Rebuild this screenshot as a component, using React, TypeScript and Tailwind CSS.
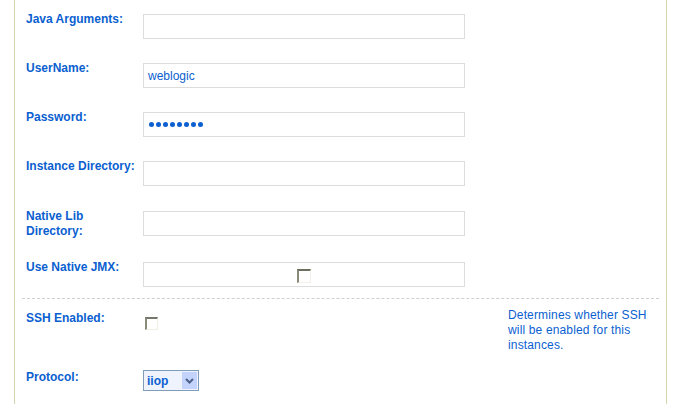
import React from 'react';

const labelCls = 'w-[117px] shrink-0 text-[12px] font-bold leading-[15px] text-[#0b5fd0] -mt-[2px]';
const boxCls = 'w-[322px] h-[25px] border border-[#dcdcdc] bg-white flex items-center';

function Checkbox() {
  return (
    <span className="block w-[13px] h-[13px] border-t-2 border-l-2 border-t-[#76766a] border-l-[#8a8a7a] border-r border-b border-r-[#f1efe2] border-b-[#f1efe2] bg-white" />
  );
}

function Row({ label, children, className = '' }: { label: React.ReactNode; children?: React.ReactNode; className?: string }) {
  return (
    <div className={`flex items-start ${className}`}>
      <div className={labelCls}>{label}</div>
      {children}
    </div>
  );
}

export default function App() {
  return (
    <div className="w-[674px] h-[404px] bg-white overflow-hidden" style={{ fontFamily: '"Liberation Sans", Arial, sans-serif' }}>
      <div className="ml-[14px] w-[653px] h-full border-l border-r border-[#d6d5b0] pl-[11px] pt-[14px]">
        <Row label="Java Arguments:">
          <div className={boxCls} />
        </Row>
        <Row label="UserName:" className="mt-[24px]">
          <div className={boxCls}>
            <span className="pl-[4px] text-[12px] text-[#0b5fd0]">weblogic</span>
          </div>
        </Row>
        <Row label="Password:" className="mt-[24px]">
          <div className={`${boxCls} gap-[2px] pl-[5px]`}>
            {Array.from({ length: 8 }).map((_, i) => (
              <span key={i} className="block w-[5px] h-[5px] rounded-full bg-[#0b5fd0]" />
            ))}
          </div>
        </Row>
        <Row label="Instance Directory:" className="mt-[24px]">
          <div className={boxCls} />
        </Row>
        <Row label={<>Native Lib<br />Directory:</>} className="mt-[25px] h-[25px]">
          <div className={boxCls} />
        </Row>
        <Row label="Use Native JMX:" className="mt-[26px]">
          <div className={`${boxCls} justify-center`}>
            <span className="block w-[14px] h-[14px] border-t-2 border-l-2 border-t-[#6d6d60] border-l-[#8a8a7a] border-r border-b border-r-[#f3efe6] border-b-[#f3efe6] bg-white mt-[2px]" />
          </div>
        </Row>
        <div className="mt-[11px] -ml-[4px] w-[637px] border-t border-dashed border-[#cfcfcf]" />
        <div className="flex items-start mt-[9px]">
          <div className={`${labelCls} mt-[3px]`}>SSH Enabled:</div>
          <div className="w-[365px] pt-[9px] pl-[2px]">
            <Checkbox />
          </div>
          <div className="text-[12px] leading-[15px] text-[#0b5fd0] tracking-[0.15px]">
            <div>Determines whether SSH</div>
            <div>will be enabled for this</div>
            <div>instances.</div>
          </div>
        </div>
        <div className="flex items-start mt-[17px]">
          <div className={`${labelCls} mt-[0px]`}>Protocol:</div>
          <div className="w-[56px] h-[21px] border border-[#7f9db9] bg-[#eef3fd] flex items-center">
            <span className="flex-1 pl-[3px] text-[12px] font-bold text-[#0b5fd0]">iiop</span>
            <span className="w-[15px] h-[17px] mr-[1px] bg-[#c3d3fb] flex items-center justify-center">
              <svg width="9" height="6" viewBox="0 0 9 6">
                <path d="M1 1 L4.5 4.5 L8 1" fill="none" stroke="#4d6185" strokeWidth="2" />
              </svg>
            </span>
          </div>
        </div>
      </div>
    </div>
  );
}
